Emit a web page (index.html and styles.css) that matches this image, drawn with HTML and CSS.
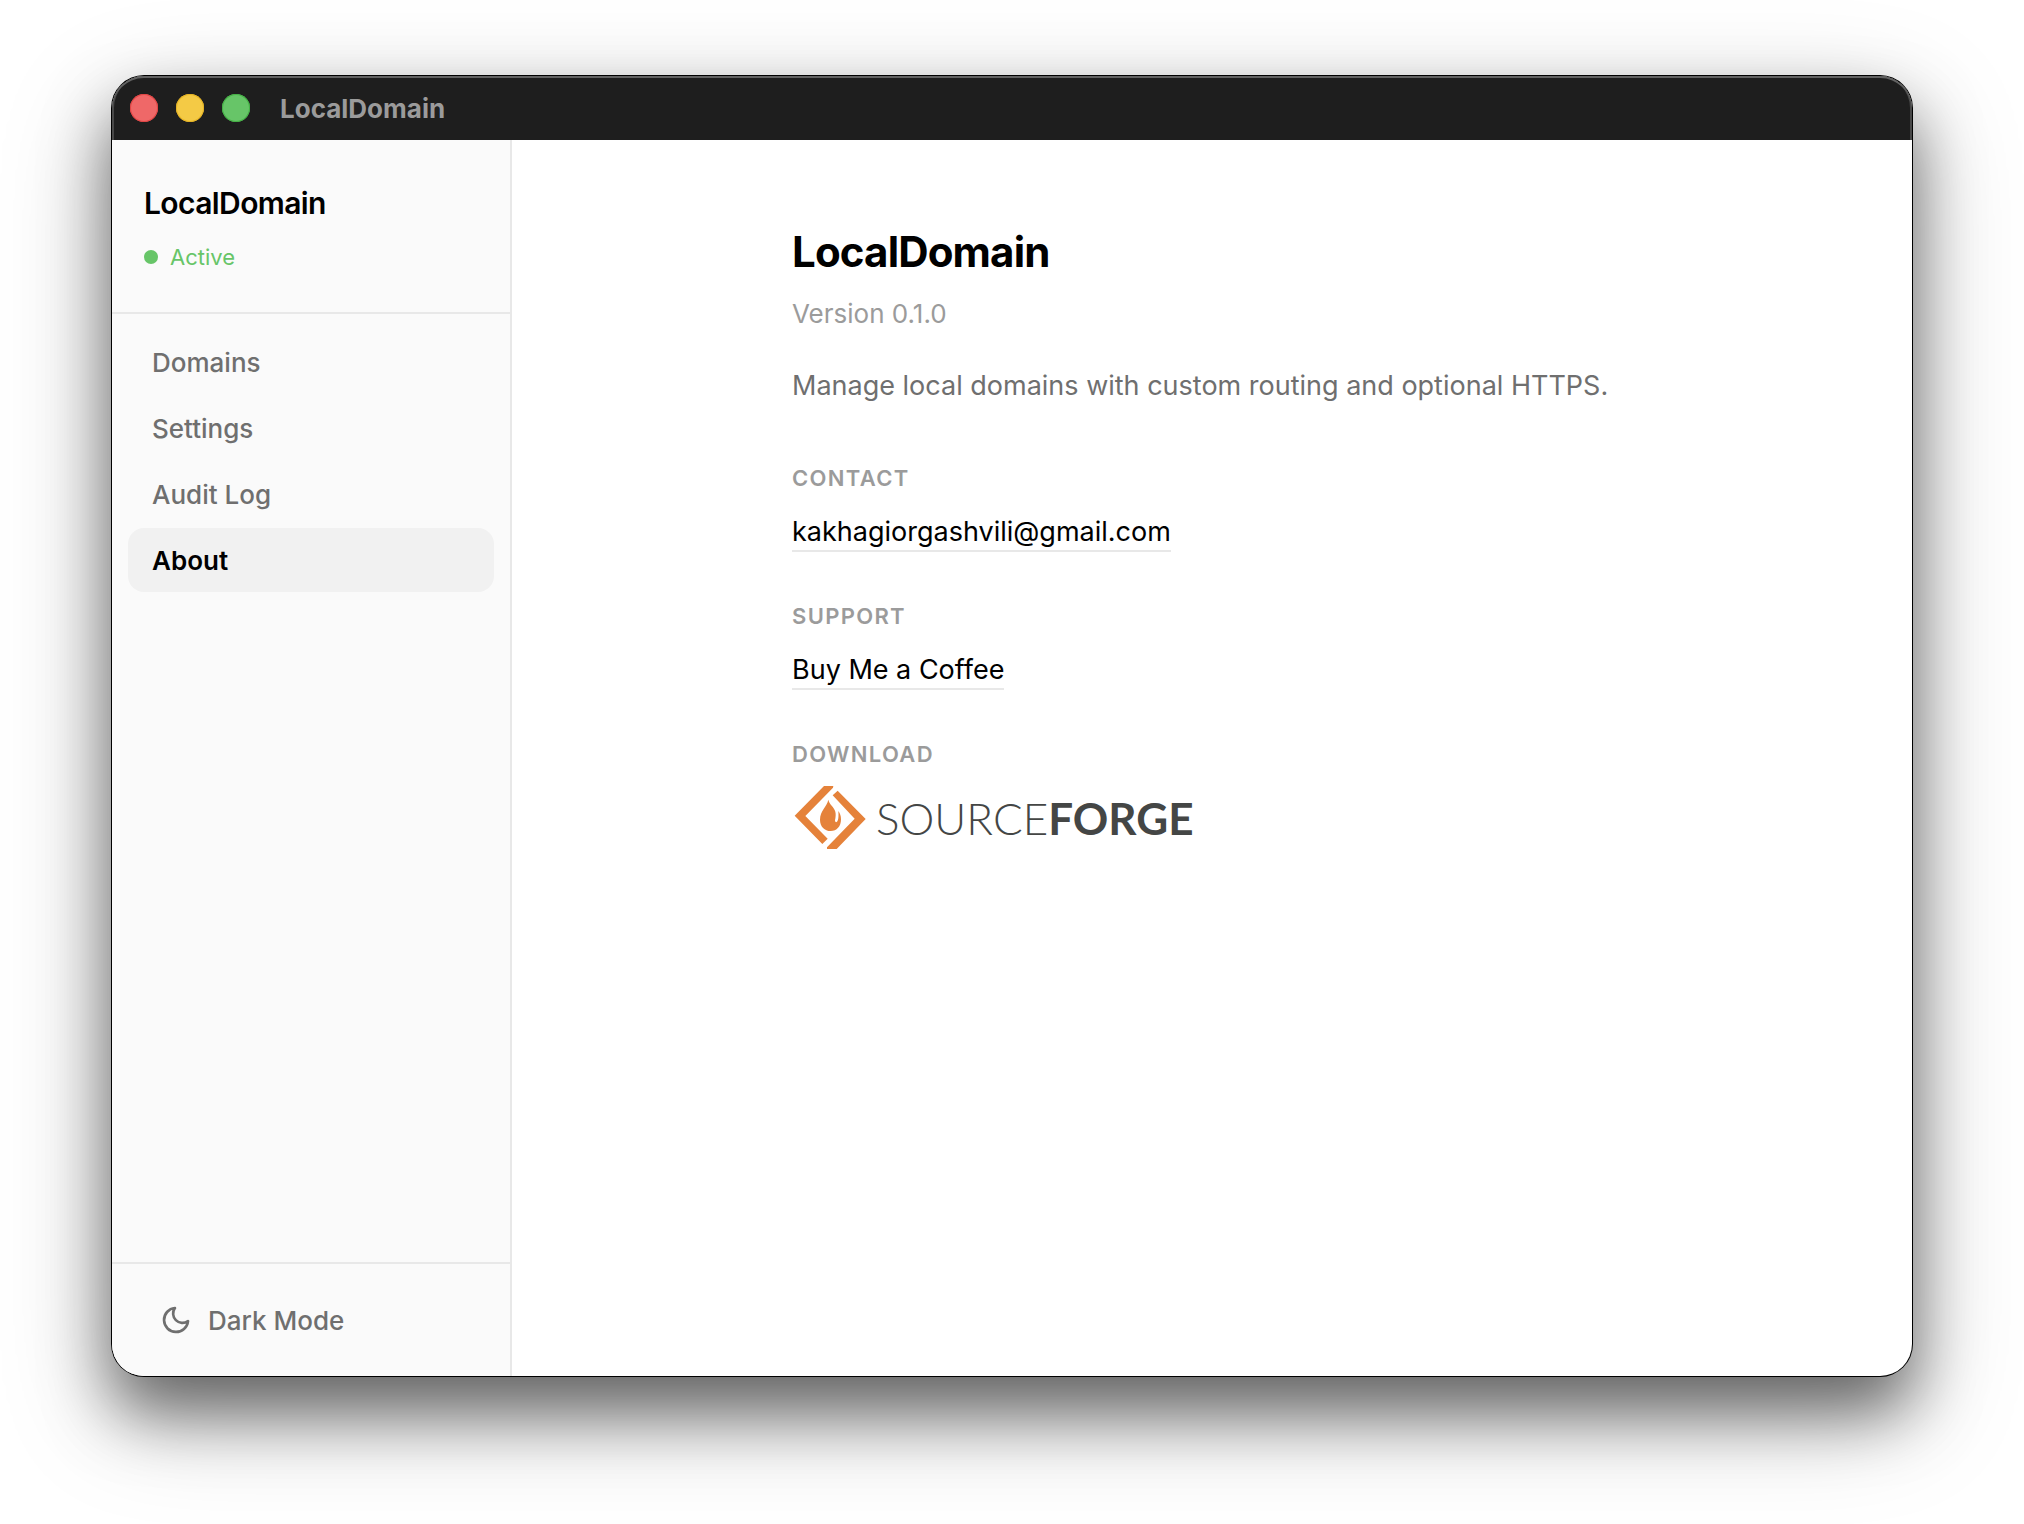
FILE: index.html
```html
<!DOCTYPE html>
<html lang="en">
<head>
<meta charset="utf-8">
<meta name="viewport" content="width=device-width, initial-scale=1">
<title>LocalDomain</title>
<link rel="stylesheet" href="styles.css">
</head>
<body>
<div class="window">
  <header class="titlebar">
    <div class="controls">
      <button class="control control-close" type="button" aria-label="Close"></button>
      <button class="control control-minimize" type="button" aria-label="Minimize"></button>
      <button class="control control-zoom" type="button" aria-label="Zoom"></button>
    </div>
    <span class="titlebar-text">LocalDomain</span>
  </header>
  <div class="app">
    <aside class="sidebar">
      <div class="brand">
        <div class="brand-name">LocalDomain</div>
        <div class="status"><span class="status-dot"></span>Active</div>
      </div>
      <nav class="nav">
        <button class="nav-item" type="button">Domains</button>
        <button class="nav-item" type="button">Settings</button>
        <button class="nav-item" type="button">Audit Log</button>
        <button class="nav-item active" type="button" aria-current="page">About</button>
      </nav>
      <div class="sidebar-footer">
        <button class="theme-toggle" type="button">
          <svg class="moon" viewBox="0 0 24 24" fill="none" stroke="currentColor" stroke-width="2" stroke-linecap="round" stroke-linejoin="round" aria-hidden="true"><path d="M21 12.79A9 9 0 1 1 11.21 3 7 7 0 0 0 21 12.79z"/></svg>
          Dark Mode
        </button>
      </div>
    </aside>
    <main class="content">
      <div class="about">
        <h1 class="about-title">LocalDomain</h1>
        <p class="version">Version 0.1.0</p>
        <p class="description">Manage local domains with custom routing and optional HTTPS.</p>
        <section class="section">
          <h2 class="label">Contact</h2>
          <a class="link" href="mailto:kakhagiorgashvili@gmail.com">kakhagiorgashvili@gmail.com</a>
        </section>
        <section class="section">
          <h2 class="label">Support</h2>
          <a class="link" href="#support">Buy Me a Coffee</a>
        </section>
        <section class="section">
          <h2 class="label label-logo">Download</h2>
          <a class="sourceforge" href="#download">
            <svg class="sourceforge-mark" viewBox="36 168 222 189" fill="#e5823a" aria-hidden="true">
              <path d="M44 257 132 168H160L159 173 76 258 143 326 127 342Z"/>
              <path d="M158 196 173 182 257 267 170 357H141V352L224 266Z"/>
              <path d="M145 209C141 230 120 241 120 269C120 290 134 303 152 303C170 303 183 290 183 268C183 257 180 250 175 243C176 258 176 270 171 275C168 278 165 276 165 271C167 262 168 252 166 245C162 230 148 224 145 209Z"/>
            </svg>
            <span class="sourceforge-name">SOURCE<b class="sourceforge-bold">FORGE</b></span>
          </a>
        </section>
      </div>
    </main>
  </div>
</div>
</body>
</html>
```
FILE: styles.css
```css
* {
  box-sizing: border-box;
}

body {
  display: flex;
  min-height: 100vh;
  margin: 0;
  padding: 76px 112px 148px;
  background: #fff;
  font-family: Inter, "Liberation Sans", sans-serif;
  font-size: 26px;
  color: #000;
}

button {
  padding: 0;
  border: 0;
  background: none;
  font: inherit;
  color: inherit;
  cursor: pointer;
}

h1, h2, p {
  margin: 0;
}

.window {
  display: flex;
  flex: 1;
  flex-direction: column;
  border-radius: 32px;
  overflow: hidden;
  background: #fff;
  box-shadow:
    0 0 0 1px #000,
    0 36px 64px rgba(0, 0, 0, 0.5),
    0 36px 110px rgba(0, 0, 0, 0.25);
}

.titlebar {
  display: flex;
  align-items: center;
  gap: 30px;
  height: 64px;
  padding: 0 18px;
  border-radius: 32px 32px 0 0;
  background: #1e1e1e;
  box-shadow: inset 0 2px #626262, inset 2px 0 #484848, inset -2px 0 #484848;
}

.controls {
  display: flex;
  gap: 18px;
}

.control {
  width: 28px;
  height: 28px;
  border-radius: 50%;
}

.control-close {
  background: #ef6868;
  box-shadow: inset 0 0 0 1px #e34443;
}

.control-minimize {
  background: #f4ca45;
  box-shadow: inset 0 0 0 1px #e5b222;
}

.control-zoom {
  background: #67c568;
  box-shadow: inset 0 0 0 1px #43b144;
}

.titlebar-text {
  font-weight: 700;
  color: #9b9b9b;
}

.app {
  display: flex;
  flex: 1;
}

.sidebar {
  display: flex;
  flex: 0 0 400px;
  flex-direction: column;
  border-right: 2px solid #e8e8e8;
  background: #fafafa;
}

.brand {
  padding: 40px 32px;
  border-bottom: 2px solid #e8e8e8;
}

.brand-name {
  margin-bottom: 16px;
  font-size: 30px;
  font-weight: 600;
  line-height: 46px;
  letter-spacing: -0.02em;
}

.status {
  display: flex;
  align-items: center;
  gap: 12px;
  font-size: 22px;
  line-height: 30px;
  color: #67c568;
}

.status-dot {
  width: 14px;
  height: 14px;
  border-radius: 50%;
  background: currentColor;
}

.nav {
  display: flex;
  flex: 1;
  flex-direction: column;
  gap: 2px;
  padding: 16px;
}

.nav-item {
  height: 64px;
  padding: 0 24px;
  border-radius: 16px;
  font-weight: 500;
  text-align: left;
  color: #6f6f6f;
}

.nav-item.active {
  background: #f1f1f1;
  font-weight: 600;
  color: #000;
}

.sidebar-footer {
  padding: 24px;
  border-top: 2px solid #e8e8e8;
}

.theme-toggle {
  display: flex;
  align-items: center;
  gap: 16px;
  width: 100%;
  height: 64px;
  padding: 0 24px;
  font-weight: 500;
  color: #6f6f6f;
}

.moon {
  width: 32px;
  height: 32px;
}

.content {
  flex: 1;
  padding: 80px 64px;
}

.about {
  max-width: 840px;
  margin: 0 auto;
}

.about-title {
  margin-bottom: 8px;
  font-size: 42px;
  font-weight: 700;
  line-height: 64px;
  letter-spacing: -0.02em;
}

.version {
  margin-bottom: 28px;
  line-height: 44px;
  color: #9b9b9b;
}

.description {
  margin-bottom: 54px;
  font-size: 27px;
  line-height: 44px;
  color: #6f6f6f;
}

.section {
  margin-bottom: 48px;
}

.label {
  margin-bottom: 20px;
  font-size: 22px;
  font-weight: 600;
  line-height: 32px;
  letter-spacing: 0.06em;
  text-transform: uppercase;
  color: #9b9b9b;
}

.label-logo {
  margin-bottom: 16px;
}

.link {
  display: block;
  width: fit-content;
  border-bottom: 2px solid #e8e8e8;
  font-size: 27px;
  line-height: 36px;
  color: #000;
  text-decoration: none;
}

.sourceforge {
  display: flex;
  align-items: center;
  gap: 10px;
  width: fit-content;
  color: #444645;
  text-decoration: none;
}

.sourceforge-mark {
  width: 74px;
  height: 63px;
}

.sourceforge-name {
  font-family: Lato, "Open Sans", sans-serif;
  font-size: 44px;
  font-weight: 300;
  line-height: 60px;
}

.sourceforge-bold {
  font-weight: 700;
}
```
